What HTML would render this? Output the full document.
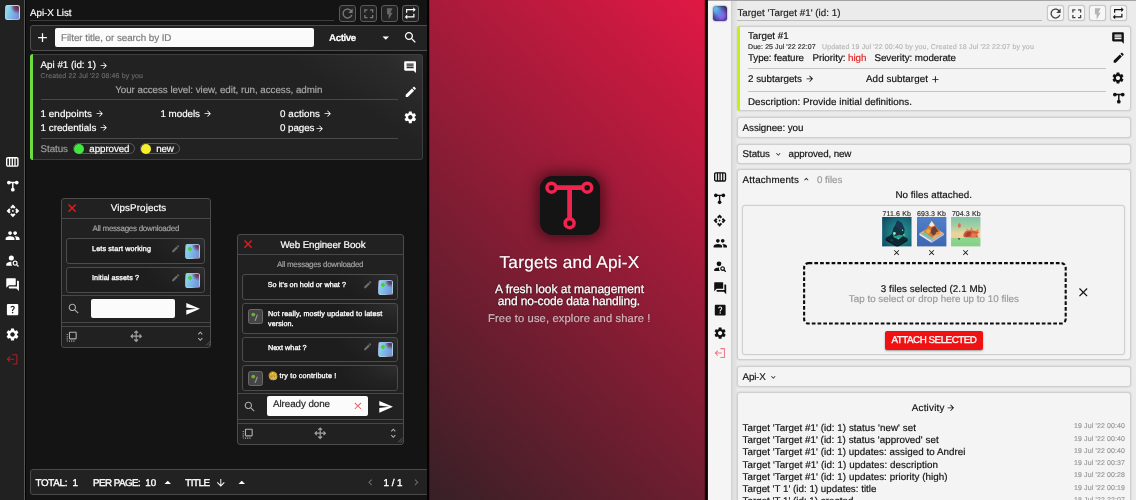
<!DOCTYPE html>
<html lang="en"><head><meta charset="utf-8"><title>Targets and Api-X</title>
<style>
*{box-sizing:border-box;margin:0;padding:0}
html,body{width:1136px;height:500px;overflow:hidden;background:#121212}
body{position:relative;font-family:"Liberation Sans", sans-serif;text-rendering:geometricPrecision}
.b,.i,.t{position:absolute}
.tl{position:absolute;left:0;top:0;width:1136px;height:500px;will-change:transform}
.i{display:block;overflow:visible}
.t{white-space:nowrap;line-height:1;display:block;-webkit-text-stroke-width:.18px}
</style></head>
<body>
<section aria-label="Api-X List panel">
<div class="b" style="left:0.00px;top:0.00px;width:429.00px;height:500.00px;background:#141414"></div>
<div class="b" style="left:0.00px;top:0.00px;width:24.00px;height:500.00px;background:#212121"></div>
<div class="b" style="left:24.00px;top:0.00px;width:1.00px;height:500.00px;background:#555"></div>
<div class="b" style="left:25.00px;top:0.00px;width:1.00px;height:500.00px;background:#030303"></div>
<div class="b" style="left:4.80px;top:4.80px;width:15.50px;height:15.30px;border-radius:2.5px;border:1px solid rgba(215,222,238,.75);background:radial-gradient(circle at 88% 8%,#6b2a48 0%,rgba(107,42,72,.85) 16%,rgba(107,42,72,0) 42%),linear-gradient(105deg,#92e2ea 0%,#7cb6ea 50%,#7a84d2 100%)"></div>
<svg class="i" style="left:6.10px;top:156.60px;width:12.6px;height:9.8px" viewBox="0 0 12.6 9.8"><rect x=".7" y=".7" width="11.2" height="8.4" rx="1.2" fill="none" stroke="#ffffff" stroke-width="1.4"/><path d="M3.6 .7v8.4M6.3 .7v8.4M9 .7v8.4" stroke="#ffffff" stroke-width="1.3" fill="none"/></svg>
<svg class="i" style="left:6.60px;top:179.90px;width:11.6px;height:11.6px" viewBox="0 0 24 24"><path d="M4 5.2H20M12 5.2V19" stroke="#ffffff" stroke-width="3" fill="none"/><circle cx="3.9" cy="5.2" r="3.9" fill="#ffffff"/><circle cx="20.1" cy="5.2" r="3.9" fill="#ffffff"/><circle cx="12" cy="20.1" r="3.9" fill="#ffffff"/></svg>
<svg class="i" style="left:5.50px;top:204.10px;width:13.8px;height:13.8px" viewBox="0 0 24 24"><path fill="#ffffff" d="M14 12l-2 2-2-2 2-2 2 2zm-2-6l2.12 2.12 2.5-2.5L12 1 7.38 5.62l2.5 2.5L12 6zm-6 6l2.12-2.12-2.5-2.5L1 12l4.62 4.62 2.5-2.5L6 12zm12 0l-2.12 2.12 2.5 2.5L23 12l-4.62-4.62-2.5 2.5L18 12zm-6 6l-2.120-2.12-2.5 2.5L12 23l4.62-4.62-2.5-2.5L12 18z"/></svg>
<svg class="i" style="left:4.70px;top:227.90px;width:15.2px;height:15.2px" viewBox="0 0 24 24"><path fill="#ffffff" d="M16 11c1.66 0 2.99-1.34 2.99-3S17.66 5 16 5c-1.66 0-3 1.34-3 3s1.34 3 3 3zm-8 0c1.66 0 2.99-1.34 2.99-3S9.66 5 8 5C6.34 5 5 6.34 5 8s1.34 3 3 3zm0 2c-2.33 0-7 1.17-7 3.5V19h14v-2.5c0-2.33-4.67-3.5-7-3.5zm8 0c-.29 0-.62.02-.97.05 1.16.84 1.97 1.97 1.970 3.45V19h6v-2.5c0-2.33-4.67-3.5-7-3.500z"/></svg>
<svg class="i" style="left:4.80px;top:252.80px;width:15.2px;height:15.2px" viewBox="0 0 24 24"><path fill="#ffffff" d="M10 4a4 4 0 1 0 0 8a4 4 0 1 0 0-8zM10.35 14.01C7.62 13.91 2 15.27 2 18v2h9.54c-2.470-2.76-1.23-5.89-1.19-5.99zM19.43 18.02c.36-.59.57-1.28.57-2.02 0-2.21-1.79-4-4-4s-4 1.79-4 4 1.79 4 4 4c.74 0 1.43-.22 2.02-.57L20.59 22 22 20.59l-2.57-2.57zM16 18c-1.100 0-2-.9-2-2s.9-2 2-2 2 .9 2 2-.9 2-2 2z"/></svg>
<svg class="i" style="left:4.80px;top:277.40px;width:15.2px;height:15.2px" viewBox="0 0 24 24"><path fill="#ffffff" d="M21 6h-2v9H6v2c0 .55.45 1 1 1h11l4 4V7c0-.55-.45-1-1-1zm-4 6V3c0-.55-.45-1-1-1H3c-.55 0-1 .45-1 1v14l4-4h10c.55 0 1-.45 1-1z"/></svg>
<svg class="i" style="left:4.80px;top:302.10px;width:15.2px;height:15.2px" viewBox="0 0 24 24"><path fill="#ffffff" d="M19 3H5c-1.1 0-2 .9-2 2v14c0 1.1.9 2 2 2h14c1.1 0 2-.9 2-2V5c0-1.1-.9-2-2-2zm-6.99 15c-.7 0-1.26-.56-1.26-1.26 0-.71.56-1.25 1.26-1.25.71 0 1.25.54 1.25 1.25-.01.69-.54 1.26-1.25 1.26zm3.010-7.4c-.76 1.11-1.48 1.46-1.87 2.17-.16.29-.22.48-.22 1.41h-1.820c0-.49-.08-1.29.31-1.98.49-.87 1.42-1.39 1.96-2.16.57-.81.25-2.33-1.37-2.33-1.060 0-1.58.8-1.8 1.48l-1.650-.7C9.01 7.15 10.22 6 11.99 6c1.48 0 2.49.67 3.010 1.52.44.72.7 2.07.02 3.08z"/></svg>
<svg class="i" style="left:4.90px;top:327.10px;width:15.0px;height:15.0px" viewBox="0 0 24 24"><path fill="#ffffff" d="M19.14 12.94c.04-.3.06-.61.06-.94 0-.32-.02-.64-.07-.94l2.03-1.58c.18-.14.23-.41.12-.61l-1.92-3.32c-.12-.22-.37-.29-.59-.22l-2.39.96c-.5-.38-1.03-.7-1.62-.94l-.36-2.54c-.04-.24-.24-.41-.48-.41h-3.84c-.24 0-.43.17-.47.41l-.36 2.54c-.59.24-1.13.57-1.62.94l-2.39-.96c-.22-.08-.47 0-.59.22L2.74 8.87c-.12.21-.08.47.12.61l2.03 1.58c-.05.3-.09.63-.09.94s.02.64.07.94l-2.03 1.58c-.18.14-.23.41-.12.61l1.92 3.32c.12.22.37.29.59.22l2.39-.96c.5.38 1.03.7 1.62.94l.36 2.54c.05.24.24.41.48.41h3.84c.24 0 .44-.17.47-.41l.36-2.54c.59-.24 1.13-.56 1.62-.94l2.39.96c.22.08.47 0 .59-.22l1.92-3.32c.12-.22.07-.47-.12-.61l-2.01-1.58zM12 15.6c-1.98 0-3.6-1.62-3.6-3.6s1.620-3.6 3.6-3.6 3.6 1.62 3.6 3.6-1.62 3.6-3.6 3.6z"/></svg>
<svg class="i" style="left:6.10px;top:352.90px;width:12.6px;height:12.6px" viewBox="0 0 24 24"><path d="M12.5 3.2H20.6V20.8H12.5" stroke="#a82028" stroke-width="2" fill="none" stroke-linejoin="round"/><path d="M15.5 12H2.6M7.6 7L2.6 12L7.6 17" stroke="#a82028" stroke-width="2" fill="none"/></svg>
<div class="b" style="left:30.00px;top:20.00px;width:304.00px;height:1px;background:#3c3c3c"></div>
<div class="b" style="left:339.00px;top:5.00px;width:17.00px;height:16.50px;border:1px solid #5a5a5a;border-radius:3px;background:#232323"></div>
<svg class="i" style="left:339.90px;top:5.65px;width:15.2px;height:15.2px" viewBox="0 0 24 24"><path fill="#7a7a7a" d="M17.65 6.35C16.2 4.9 14.21 4 12 4c-4.42 0-7.99 3.58-7.99 8s3.57 8 7.99 8c3.73 0 6.84-2.55 7.73-6h-2.08c-.82 2.33-3.04 4-5.65 4-3.31 0-6-2.69-6-6s2.69-6 6-6c1.66 0 3.14.69 4.22 1.78L13 11h7V4l-2.35 2.35z"/></svg>
<div class="b" style="left:360.00px;top:5.00px;width:17.00px;height:16.50px;border:1px solid #5a5a5a;border-radius:3px;background:#232323"></div>
<svg class="i" style="left:360.75px;top:5.50px;width:15.5px;height:15.5px" viewBox="0 0 24 24"><path fill="#7a7a7a" d="M7 14H5v5h5v-2H7v-3zm-2-4h2V7h3V5H5v5zm12 7h-3v2h5v-5h-2v3zM14 5v2h3v3h2V5h-5z"/></svg>
<div class="b" style="left:381.00px;top:5.00px;width:17.00px;height:16.50px;border:1px solid #5a5a5a;border-radius:3px;background:#232323"></div>
<svg class="i" style="left:382.75px;top:6.50px;width:13.5px;height:13.5px" viewBox="0 0 24 24"><path fill="#666" d="M7 2v11h3v9l7-12h-4l4-8z"/></svg>
<div class="b" style="left:402.00px;top:5.00px;width:17.00px;height:16.50px;border:1px solid #5e5e5e;border-radius:3px;background:#232323"></div>
<svg class="i" style="left:403.25px;top:6.00px;width:14.5px;height:14.5px" viewBox="0 0 24 24"><path fill="#fff" d="M7 7h10v3l4-4-4-4v3H5v6h2V7zm10 10H7v-3l-4 4 4 4v-3h12v-6h-2v4z"/></svg>
<div class="b" style="left:29.50px;top:24.80px;width:410.00px;height:26.00px;border:1px solid #4e4e4e;border-radius:3px;background:#222"></div>
<svg class="i" style="left:35.00px;top:30.10px;width:15px;height:15px" viewBox="0 0 24 24"><path fill="#fff" d="M19 13h-6v6h-2v-6H5v-2h6V5h2v6h6v2z"/></svg>
<div class="b" style="left:55.30px;top:28.20px;width:258.40px;height:18.90px;background:#fbfbfb;border-radius:2px"></div>
<svg class="i" style="left:378.45px;top:29.55px;width:15.5px;height:15.5px" viewBox="0 0 24 24"><path fill="#fff" d="M7 10l5 5 5-5z"/></svg>
<svg class="i" style="left:403.10px;top:30.10px;width:15px;height:15px" viewBox="0 0 24 24"><path fill="#fff" d="M15.5 14h-.79l-.28-.27C15.41 12.59 16 11.11 16 9.5 16 5.91 13.09 3 9.5 3S3 5.91 3 9.5 5.91 16 9.5 16c1.61 0 3.09-.59 4.23-1.57l.27.28v.79l5 4.99L20.49 19l-4.99-5zm-6 0C7.01 14 5 11.99 5 9.5S7.01 5 9.5 5 14 7.01 14 9.5 11.99 14 9.5 14z"/></svg>
<div class="b" style="left:30.00px;top:54.00px;width:392.60px;height:105.60px;border:1px solid #3e3e3e;border-left:0;border-radius:3px;background:linear-gradient(214deg,#343434 0%,#2b2b2b 8%,#222 26%)"></div>
<div class="b" style="left:30.00px;top:54.00px;width:3.20px;height:105.60px;background:#6ddc3e;border-radius:3px 0 0 3px"></div>
<svg class="i" style="left:99.40px;top:60.50px;width:9.4px;height:9.4px" viewBox="0 0 24 24"><path fill="#fff" d="M12 4l-1.41 1.41L16.17 11H4v2h12.17l-5.58 5.59L12 20l8-8z"/></svg>
<div class="b" style="left:40.50px;top:99.20px;width:357.50px;height:1px;background:#4a4a4a"></div>
<svg class="i" style="left:94.70px;top:108.90px;width:9.4px;height:9.4px" viewBox="0 0 24 24"><path fill="#fff" d="M12 4l-1.41 1.41L16.17 11H4v2h12.17l-5.58 5.59L12 20l8-8z"/></svg>
<svg class="i" style="left:99.30px;top:123.10px;width:9.4px;height:9.4px" viewBox="0 0 24 24"><path fill="#fff" d="M12 4l-1.41 1.41L16.17 11H4v2h12.17l-5.58 5.59L12 20l8-8z"/></svg>
<svg class="i" style="left:203.30px;top:108.90px;width:9.4px;height:9.4px" viewBox="0 0 24 24"><path fill="#fff" d="M12 4l-1.41 1.41L16.17 11H4v2h12.17l-5.58 5.59L12 20l8-8z"/></svg>
<svg class="i" style="left:322.80px;top:108.70px;width:9.4px;height:9.4px" viewBox="0 0 24 24"><path fill="#fff" d="M12 4l-1.41 1.41L16.17 11H4v2h12.17l-5.58 5.59L12 20l8-8z"/></svg>
<svg class="i" style="left:314.60px;top:123.60px;width:9.4px;height:9.4px" viewBox="0 0 24 24"><path fill="#fff" d="M12 4l-1.41 1.41L16.17 11H4v2h12.17l-5.58 5.59L12 20l8-8z"/></svg>
<div class="b" style="left:40.50px;top:137.60px;width:357.50px;height:1px;background:#4a4a4a"></div>
<div class="b" style="left:73.40px;top:143.20px;width:61.80px;height:11.20px;border:1px solid #5c5c5c;border-radius:6px"></div>
<div class="b" style="left:73.70px;top:143.50px;width:10.50px;height:10.50px;border-radius:50%;background:#3ee83e"></div>
<div class="b" style="left:140.40px;top:143.20px;width:39.30px;height:11.20px;border:1px solid #5c5c5c;border-radius:6px"></div>
<div class="b" style="left:140.70px;top:143.50px;width:10.50px;height:10.50px;border-radius:50%;background:#f4f02c"></div>
<svg class="i" style="left:403.40px;top:60.20px;width:14.2px;height:14.2px" viewBox="0 0 24 24"><path fill="#fff" d="M21.99 4c0-1.1-.89-2-1.99-2H4c-1.1 0-2 .9-2 2v12c0 1.1.9 2 2 2h14l4 4-.01-18zM18 14H6v-2h12v2zm0-3H6V9h12v2zm0-3H6V6h12v2z"/></svg>
<svg class="i" style="left:403.60px;top:85.40px;width:13.6px;height:13.6px" viewBox="0 0 24 24"><path fill="#fff" d="M3 17.25V21h3.75L17.81 9.94l-3.75-3.75L3 17.25zM20.71 7.04c.39-.39.39-1.02 0-1.41l-2.34-2.34c-.39-.39-1.02-.39-1.41 0l-1.83 1.83 3.75 3.75 1.83-1.83z"/></svg>
<svg class="i" style="left:403.20px;top:109.70px;width:14.6px;height:14.6px" viewBox="0 0 24 24"><path fill="#fff" d="M19.14 12.94c.04-.3.06-.61.06-.94 0-.32-.02-.64-.07-.94l2.03-1.58c.18-.14.23-.41.12-.61l-1.92-3.32c-.12-.22-.37-.29-.59-.22l-2.39.96c-.5-.38-1.03-.7-1.62-.94l-.36-2.54c-.04-.24-.24-.41-.48-.41h-3.84c-.24 0-.43.17-.47.41l-.36 2.54c-.59.24-1.13.57-1.62.94l-2.39-.96c-.22-.08-.47 0-.59.22L2.74 8.87c-.12.21-.08.47.12.61l2.03 1.58c-.05.3-.09.63-.09.94s.02.64.07.94l-2.03 1.58c-.18.14-.23.41-.12.61l1.92 3.32c.12.22.37.29.59.22l2.39-.96c.5.38 1.03.7 1.62.94l.36 2.54c.05.24.24.41.48.41h3.84c.24 0 .44-.17.47-.41l.36-2.54c.59-.24 1.13-.56 1.62-.94l2.39.96c.22.08.47 0 .59-.22l1.92-3.32c.12-.22.07-.47-.12-.61l-2.01-1.58zM12 15.6c-1.98 0-3.6-1.62-3.6-3.6s1.620-3.6 3.6-3.6 3.6 1.62 3.6 3.6-1.62 3.6-3.6 3.6z"/></svg>
<div class="b" style="left:61.20px;top:197.80px;width:150.00px;height:149.80px;border:1px solid #4c4c4c;border-radius:3px;background:#212121"></div>
<svg class="i" style="left:67.60px;top:204.20px;width:8.2px;height:8.2px" viewBox="0 0 8 8"><path d="M.5 .5L7.5 7.5M7.5 .5L.5 7.5" stroke="#e21a1a" stroke-width="1.5"/></svg>
<div class="b" style="left:62.20px;top:217.60px;width:148.00px;height:1px;background:#484848"></div>
<div class="b" style="left:66.20px;top:238.30px;width:139.20px;height:25.80px;border:1px solid #4c4c4c;border-radius:3px;background:radial-gradient(ellipse 60px 30px at 100% 0%,#2e2e2e 0%,#222 60%,#1d1d1d 100%)"></div>
<svg class="i" style="left:170.60px;top:243.70px;width:9.4px;height:9.4px" viewBox="0 0 24 24"><path fill="#6e6e6e" d="M3 17.25V21h3.75L17.81 9.94l-3.75-3.75L3 17.25zM20.71 7.04c.39-.39.39-1.02 0-1.41l-2.34-2.34c-.39-.39-1.02-.39-1.41 0l-1.83 1.83 3.75 3.75 1.83-1.83z"/></svg>
<div class="b" style="left:185.00px;top:244.00px;width:15.00px;height:15.00px;border-radius:2.5px;border:1px solid rgba(200,210,230,.4);background:radial-gradient(circle 2.1px at 30% 30%,#55c83c 0 80%,rgba(88,216,74,0) 100%),radial-gradient(circle at 92% 4%,#6b2a48 0%,rgba(107,42,72,.8) 14%,rgba(107,42,72,0) 36%),linear-gradient(105deg,#8edae6 0%,#7ab6e6 50%,#7690d4 100%)"></div>
<div class="b" style="left:66.20px;top:267.30px;width:139.20px;height:25.50px;border:1px solid #4c4c4c;border-radius:3px;background:radial-gradient(ellipse 60px 30px at 100% 0%,#2e2e2e 0%,#222 60%,#1d1d1d 100%)"></div>
<svg class="i" style="left:170.60px;top:272.90px;width:9.4px;height:9.4px" viewBox="0 0 24 24"><path fill="#6e6e6e" d="M3 17.25V21h3.75L17.81 9.94l-3.75-3.75L3 17.25zM20.71 7.04c.39-.39.39-1.02 0-1.41l-2.34-2.34c-.39-.39-1.02-.39-1.41 0l-1.83 1.83 3.75 3.75 1.83-1.83z"/></svg>
<div class="b" style="left:185.00px;top:272.60px;width:15.00px;height:15.00px;border-radius:2.5px;border:1px solid rgba(200,210,230,.4);background:radial-gradient(circle 2.1px at 30% 30%,#55c83c 0 80%,rgba(88,216,74,0) 100%),radial-gradient(circle at 92% 4%,#6b2a48 0%,rgba(107,42,72,.8) 14%,rgba(107,42,72,0) 36%),linear-gradient(105deg,#8edae6 0%,#7ab6e6 50%,#7690d4 100%)"></div>
<div class="b" style="left:62.20px;top:294.80px;width:148.00px;height:1px;background:#484848"></div>
<div class="b" style="left:62.20px;top:321.80px;width:148.00px;height:1px;background:#484848"></div>
<div class="b" style="left:62.20px;top:326.20px;width:148.00px;height:1px;background:#484848"></div>
<svg class="i" style="left:64.70px;top:330.00px;width:13.4px;height:13.4px" viewBox="0 0 24 24"><path fill="#b0b0b0" d="M3 13h2v-2H3v2zm0 4h2v-2H3v2zm2 4v-2H3c0 1.1.89 2 2 2zM3 9h2V7H3v2zm12 12h2v-2h-2v2zm4-18H9c-1.11 0-2 .9-2 2v10c0 1.1.89 2 2 2h10c1.1 0 2-.9 2-2V5c0-1.100-.9-2-2-2zm0 12H9V5h10v10zm-8 6h2v-2h-2v2zm-4 0h2v-2H7v2z"/></svg>
<svg class="i" style="left:129.80px;top:330.40px;width:12.4px;height:12.4px" viewBox="0 0 12.4 12.4"><path d="M6.2 1V11.4M1 6.2H11.4M4.3 2.900L6.2 1L8.1 2.900M4.3 9.5L6.2 11.4L8.1 9.500M2.900 4.3L1 6.2L2.900 8.1M9.500 4.300L11.4 6.2L9.500 8.1" stroke="#a2a2a2" stroke-width="1.15" fill="none"/></svg>
<svg class="i" style="left:194.10px;top:330.40px;width:12.6px;height:12.6px" viewBox="0 0 24 24"><path fill="#b0b0b0" d="M12 5.83L15.17 9l1.41-1.41L12 3 7.41 7.59 8.83 9 12 5.83zm0 12.34L8.83 15l-1.41 1.41L12 21l4.59-4.59L15.17 15 12 18.17z"/></svg>
<svg class="i" style="left:204.70px;top:340.30px;width:6px;height:6px" viewBox="0 0 6 6"><path d="M5.5 1L1 5.5M5.5 3.5L3.5 5.5" stroke="#6a6a6a" stroke-width=".8"/></svg>
<svg class="i" style="left:67.10px;top:301.60px;width:13.6px;height:13.6px" viewBox="0 0 24 24"><path fill="#a8a8a8" d="M15.5 14h-.79l-.28-.27C15.41 12.59 16 11.11 16 9.5 16 5.91 13.09 3 9.5 3S3 5.91 3 9.5 5.91 16 9.5 16c1.61 0 3.09-.59 4.23-1.57l.27.28v.79l5 4.99L20.49 19l-4.99-5zm-6 0C7.01 14 5 11.99 5 9.5S7.01 5 9.5 5 14 7.01 14 9.5 11.99 14 9.5 14z"/></svg>
<div class="b" style="left:91.40px;top:298.60px;width:84.00px;height:19.00px;background:#fbfbfb;border-radius:2px"></div>
<svg class="i" style="left:185.20px;top:300.70px;width:15.6px;height:15.6px" viewBox="0 0 24 24"><path fill="#fff" d="M2.01 21L23 12 2.01 3 2 10l15 2-15 2z"/></svg>
<div class="b" style="left:237.10px;top:234.00px;width:166.50px;height:210.50px;border:1px solid #4c4c4c;border-radius:3px;background:#212121"></div>
<svg class="i" style="left:243.50px;top:240.40px;width:8.2px;height:8.2px" viewBox="0 0 8 8"><path d="M.5 .5L7.5 7.5M7.5 .5L.5 7.5" stroke="#e21a1a" stroke-width="1.5"/></svg>
<div class="b" style="left:238.10px;top:253.80px;width:164.50px;height:1px;background:#484848"></div>
<div class="b" style="left:242.30px;top:274.30px;width:155.40px;height:25.80px;border:1px solid #4c4c4c;border-radius:3px;background:radial-gradient(ellipse 60px 30px at 100% 0%,#2e2e2e 0%,#222 60%,#1d1d1d 100%)"></div>
<svg class="i" style="left:362.80px;top:279.80px;width:9.4px;height:9.4px" viewBox="0 0 24 24"><path fill="#6e6e6e" d="M3 17.25V21h3.75L17.81 9.94l-3.75-3.75L3 17.25zM20.71 7.04c.39-.39.39-1.02 0-1.41l-2.34-2.34c-.39-.39-1.02-.39-1.41 0l-1.83 1.83 3.75 3.75 1.83-1.83z"/></svg>
<div class="b" style="left:377.70px;top:280.00px;width:15.00px;height:15.00px;border-radius:2.5px;border:1px solid rgba(200,210,230,.4);background:radial-gradient(circle 2.1px at 30% 30%,#55c83c 0 80%,rgba(88,216,74,0) 100%),radial-gradient(circle at 92% 4%,#6b2a48 0%,rgba(107,42,72,.8) 14%,rgba(107,42,72,0) 36%),linear-gradient(105deg,#8edae6 0%,#7ab6e6 50%,#7690d4 100%)"></div>
<div class="b" style="left:242.30px;top:303.30px;width:155.40px;height:30.30px;border:1px solid #4c4c4c;border-radius:3px;background:radial-gradient(ellipse 60px 30px at 100% 0%,#2e2e2e 0%,#222 60%,#1d1d1d 100%)"></div>
<div class="b" style="left:248.00px;top:308.50px;width:15.00px;height:15.00px;border-radius:2.5px;border:1px solid #6a6a6a;background:#454545"></div>
<svg class="i" style="left:248.00px;top:308.50px;width:15px;height:15px" viewBox="0 0 15 15"><circle cx="5.300" cy="5.6" r="1.900" fill="#66b432"/><path d="M9.4 5.8L7.300 11.2" stroke="#9a9a9a" stroke-width="1.1"/><circle cx="7.300" cy="11.2" r=".8" fill="#8a8a8a"/></svg>
<div class="b" style="left:242.30px;top:336.60px;width:155.40px;height:25.90px;border:1px solid #4c4c4c;border-radius:3px;background:radial-gradient(ellipse 60px 30px at 100% 0%,#2e2e2e 0%,#222 60%,#1d1d1d 100%)"></div>
<svg class="i" style="left:362.90px;top:342.20px;width:9.4px;height:9.4px" viewBox="0 0 24 24"><path fill="#6e6e6e" d="M3 17.25V21h3.75L17.81 9.94l-3.75-3.75L3 17.25zM20.71 7.04c.39-.39.39-1.02 0-1.41l-2.34-2.34c-.39-.39-1.02-.39-1.41 0l-1.83 1.83 3.75 3.75 1.83-1.83z"/></svg>
<div class="b" style="left:377.60px;top:342.00px;width:15.00px;height:15.00px;border-radius:2.5px;border:1px solid rgba(200,210,230,.4);background:radial-gradient(circle 2.1px at 30% 30%,#55c83c 0 80%,rgba(88,216,74,0) 100%),radial-gradient(circle at 92% 4%,#6b2a48 0%,rgba(107,42,72,.8) 14%,rgba(107,42,72,0) 36%),linear-gradient(105deg,#8edae6 0%,#7ab6e6 50%,#7690d4 100%)"></div>
<div class="b" style="left:242.30px;top:365.40px;width:155.40px;height:25.40px;border:1px solid #4c4c4c;border-radius:3px;background:radial-gradient(ellipse 60px 30px at 100% 0%,#2e2e2e 0%,#222 60%,#1d1d1d 100%)"></div>
<div class="b" style="left:248.00px;top:370.50px;width:15.00px;height:15.00px;border-radius:2.5px;border:1px solid #6a6a6a;background:#454545"></div>
<svg class="i" style="left:248.00px;top:370.50px;width:15px;height:15px" viewBox="0 0 15 15"><circle cx="5.300" cy="5.6" r="1.900" fill="#66b432"/><path d="M9.4 5.8L7.300 11.2" stroke="#9a9a9a" stroke-width="1.1"/><circle cx="7.300" cy="11.2" r=".8" fill="#8a8a8a"/></svg>
<svg class="i" style="left:268.60px;top:371.80px;width:8.4px;height:8.4px" viewBox="0 0 10 10"><circle cx="5" cy="5" r="4.9" fill="#fad040"/><path d="M1.7 5.400h6.600a3.300 3 0 0 1-6.600 0z" fill="#fff"/></svg>
<div class="b" style="left:238.10px;top:393.40px;width:164.50px;height:1px;background:#484848"></div>
<div class="b" style="left:238.10px;top:418.80px;width:164.50px;height:1px;background:#484848"></div>
<div class="b" style="left:238.10px;top:423.20px;width:164.50px;height:1px;background:#484848"></div>
<svg class="i" style="left:240.60px;top:427.00px;width:13.4px;height:13.4px" viewBox="0 0 24 24"><path fill="#b0b0b0" d="M3 13h2v-2H3v2zm0 4h2v-2H3v2zm2 4v-2H3c0 1.1.89 2 2 2zM3 9h2V7H3v2zm12 12h2v-2h-2v2zm4-18H9c-1.11 0-2 .9-2 2v10c0 1.1.89 2 2 2h10c1.1 0 2-.9 2-2V5c0-1.100-.9-2-2-2zm0 12H9V5h10v10zm-8 6h2v-2h-2v2zm-4 0h2v-2H7v2z"/></svg>
<svg class="i" style="left:314.10px;top:427.40px;width:12.4px;height:12.4px" viewBox="0 0 12.4 12.4"><path d="M6.2 1V11.4M1 6.2H11.4M4.3 2.900L6.2 1L8.1 2.900M4.3 9.5L6.2 11.4L8.1 9.500M2.900 4.3L1 6.2L2.900 8.1M9.500 4.300L11.4 6.2L9.500 8.1" stroke="#a2a2a2" stroke-width="1.15" fill="none"/></svg>
<svg class="i" style="left:386.50px;top:427.40px;width:12.6px;height:12.6px" viewBox="0 0 24 24"><path fill="#b0b0b0" d="M12 5.83L15.17 9l1.41-1.41L12 3 7.41 7.59 8.83 9 12 5.83zm0 12.34L8.83 15l-1.41 1.41L12 21l4.59-4.59L15.17 15 12 18.17z"/></svg>
<svg class="i" style="left:397.10px;top:437.30px;width:6px;height:6px" viewBox="0 0 6 6"><path d="M5.5 1L1 5.5M5.5 3.5L3.5 5.5" stroke="#6a6a6a" stroke-width=".8"/></svg>
<svg class="i" style="left:243.10px;top:399.60px;width:13.6px;height:13.6px" viewBox="0 0 24 24"><path fill="#a8a8a8" d="M15.5 14h-.79l-.28-.27C15.41 12.59 16 11.11 16 9.5 16 5.91 13.09 3 9.5 3S3 5.91 3 9.5 5.91 16 9.5 16c1.61 0 3.09-.59 4.23-1.57l.27.28v.79l5 4.99L20.49 19l-4.99-5zm-6 0C7.01 14 5 11.99 5 9.5S7.01 5 9.5 5 14 7.01 14 9.5 11.99 14 9.5 14z"/></svg>
<div class="b" style="left:267.20px;top:396.40px;width:100.70px;height:19.50px;background:#fbfbfb;border-radius:2px"></div>
<svg class="i" style="left:352.30px;top:400.30px;width:11.8px;height:11.8px" viewBox="0 0 24 24"><path fill="#ee5a5a" d="M19 6.41L17.59 5 12 10.59 6.41 5 5 6.41 10.59 12 5 17.59 6.41 19 12 13.41 17.59 19 19 17.59 13.41 12z"/></svg>
<svg class="i" style="left:378.00px;top:398.50px;width:15.6px;height:15.6px" viewBox="0 0 24 24"><path fill="#fff" d="M2.01 21L23 12 2.01 3 2 10l15 2-15 2z"/></svg>
<div class="b" style="left:30.00px;top:469.40px;width:410.00px;height:25.40px;border:1px solid #4a4a4a;border-radius:3px;background:#222"></div>
<svg class="i" style="left:159.85px;top:474.85px;width:15.5px;height:15.5px" viewBox="0 0 24 24"><path fill="#fff" d="M7 14l5-5 5 5z"/></svg>
<svg class="i" style="left:215.20px;top:476.50px;width:11.6px;height:11.6px" viewBox="0 0 24 24"><path fill="#fff" d="M20 12l-1.41-1.41L13 16.17V4h-2v12.17l-5.58-5.590L4 12l8 8 8-8z"/></svg>
<svg class="i" style="left:234.05px;top:474.85px;width:15.5px;height:15.5px" viewBox="0 0 24 24"><path fill="#fff" d="M7 14l5-5 5 5z"/></svg>
<svg class="i" style="left:364.00px;top:476.10px;width:12.6px;height:12.6px" viewBox="0 0 24 24"><path fill="#6c6c6c" d="M15.41 7.41L14 6l-6 6 6 6 1.41-1.41L10.83 12z"/></svg>
<svg class="i" style="left:410.00px;top:476.10px;width:12.6px;height:12.6px" viewBox="0 0 24 24"><path fill="#6c6c6c" d="M10 6L8.59 7.41 13.17 12l-4.58 4.59L10 18l6-6z"/></svg>
<div class="b" style="left:427.00px;top:0.00px;width:2.00px;height:500.00px;background:#0a0002"></div>
</section>
<section aria-label="Welcome panel">
<div class="b" style="left:429.00px;top:0.00px;width:276.00px;height:500.00px;background:linear-gradient(42deg,#372026 0%,#e01844 100%)"></div>
<div class="b" style="left:429.00px;top:0.00px;width:1.00px;height:500.00px;background:rgba(0,0,0,.22)"></div>
<div class="b" style="left:704.30px;top:0.00px;width:1.00px;height:500.00px;background:rgba(0,0,0,.18)"></div>
<div class="b" style="left:705.00px;top:0.00px;width:2.60px;height:500.00px;background:linear-gradient(90deg,#30000a,#050001 60%,#222)"></div>
<div class="b" style="left:540.00px;top:176.20px;width:59.50px;height:59.30px;background:#141414;border-radius:12.5px;box-shadow:0 0 14px 3px rgba(10,0,4,.55)"></div>
<svg class="i" style="left:540.00px;top:176.20px;width:59.5px;height:59.3px" viewBox="0 0 59.5 59.3"><g fill="none" stroke="#f0244f" stroke-width="4.3"><path d="M16 11.7H42.700M29.6 11.700V42.700" stroke-width="4.800"/><circle cx="11.500" cy="11.7" r="4.5" stroke-width="3.500"/><circle cx="47.2" cy="11.7" r="4.5" stroke-width="3.500"/><circle cx="29.6" cy="47.2" r="4.5" stroke-width="3.500"/></g></svg>
</section>
<section aria-label="Target details panel">
<div class="b" style="left:707.50px;top:0.00px;width:428.50px;height:500.00px;background:#ebebeb"></div>
<div class="b" style="left:707.50px;top:0.00px;width:23.30px;height:500.00px;background:#f5f5f5"></div>
<div class="b" style="left:730.80px;top:0.00px;width:6.20px;height:500.00px;background:linear-gradient(90deg,#cdcdcd,#dedede 30%,#e6e6e6)"></div>
<div class="b" style="left:707.50px;top:0.00px;width:428.50px;height:1.00px;background:#a4a4a4"></div>
<div class="b" style="left:712.50px;top:5.80px;width:14.60px;height:14.80px;border-radius:3px;background:linear-gradient(to top right,#3a2486 0%,rgba(58,36,134,0) 40%,rgba(60,30,80,0) 58%,#3e2054 96%),linear-gradient(to bottom right,#6ae0e8 0%,#5c8ee6 42%,#8664e0 72%,#46288c 100%);box-shadow:0 0 1.5px #402860,inset 0 0 2px rgba(30,10,60,.7)"></div>
<svg class="i" style="left:713.90px;top:172.10px;width:12.2px;height:9.8px" viewBox="0 0 12.6 9.8"><rect x=".7" y=".7" width="11.2" height="8.4" rx="1.2" fill="none" stroke="#111" stroke-width="1.4"/><path d="M3.6 .7v8.4M6.3 .7v8.4M9 .7v8.4" stroke="#111" stroke-width="1.3" fill="none"/></svg>
<svg class="i" style="left:714.40px;top:193.20px;width:11.2px;height:11.2px" viewBox="0 0 24 24"><path d="M4 5.2H20M12 5.2V19" stroke="#111" stroke-width="3" fill="none"/><circle cx="3.9" cy="5.2" r="3.9" fill="#111"/><circle cx="20.1" cy="5.2" r="3.9" fill="#111"/><circle cx="12" cy="20.1" r="3.9" fill="#111"/></svg>
<svg class="i" style="left:713.40px;top:214.40px;width:13.2px;height:13.2px" viewBox="0 0 24 24"><path fill="#111" d="M14 12l-2 2-2-2 2-2 2 2zm-2-6l2.12 2.12 2.5-2.5L12 1 7.38 5.62l2.5 2.5L12 6zm-6 6l2.12-2.12-2.5-2.5L1 12l4.62 4.62 2.5-2.5L6 12zm12 0l-2.12 2.12 2.5 2.5L23 12l-4.62-4.62-2.5 2.5L18 12zm-6 6l-2.120-2.12-2.5 2.5L12 23l4.62-4.62-2.5-2.5L12 18z"/></svg>
<svg class="i" style="left:712.70px;top:236.30px;width:14.6px;height:14.6px" viewBox="0 0 24 24"><path fill="#111" d="M16 11c1.66 0 2.99-1.34 2.99-3S17.66 5 16 5c-1.66 0-3 1.34-3 3s1.34 3 3 3zm-8 0c1.66 0 2.99-1.34 2.99-3S9.66 5 8 5C6.34 5 5 6.34 5 8s1.34 3 3 3zm0 2c-2.33 0-7 1.17-7 3.5V19h14v-2.5c0-2.33-4.67-3.5-7-3.5zm8 0c-.29 0-.62.02-.97.05 1.16.84 1.97 1.97 1.970 3.45V19h6v-2.5c0-2.33-4.67-3.5-7-3.500z"/></svg>
<svg class="i" style="left:712.80px;top:259.30px;width:14.4px;height:14.4px" viewBox="0 0 24 24"><path fill="#111" d="M10 4a4 4 0 1 0 0 8a4 4 0 1 0 0-8zM10.35 14.01C7.62 13.91 2 15.27 2 18v2h9.54c-2.470-2.76-1.23-5.89-1.19-5.99zM19.43 18.02c.36-.59.57-1.28.57-2.02 0-2.21-1.79-4-4-4s-4 1.79-4 4 1.79 4 4 4c.74 0 1.43-.22 2.02-.57L20.59 22 22 20.59l-2.57-2.57zM16 18c-1.100 0-2-.9-2-2s.9-2 2-2 2 .9 2 2-.9 2-2 2z"/></svg>
<svg class="i" style="left:712.80px;top:281.00px;width:14.4px;height:14.4px" viewBox="0 0 24 24"><path fill="#111" d="M21 6h-2v9H6v2c0 .55.45 1 1 1h11l4 4V7c0-.55-.45-1-1-1zm-4 6V3c0-.55-.45-1-1-1H3c-.55 0-1 .45-1 1v14l4-4h10c.55 0 1-.45 1-1z"/></svg>
<svg class="i" style="left:712.80px;top:303.20px;width:14.4px;height:14.4px" viewBox="0 0 24 24"><path fill="#111" d="M19 3H5c-1.1 0-2 .9-2 2v14c0 1.1.9 2 2 2h14c1.1 0 2-.9 2-2V5c0-1.1-.9-2-2-2zm-6.99 15c-.7 0-1.26-.56-1.26-1.26 0-.71.56-1.25 1.26-1.25.71 0 1.25.54 1.25 1.25-.01.69-.54 1.26-1.25 1.26zm3.010-7.4c-.76 1.11-1.48 1.46-1.87 2.17-.16.29-.22.48-.22 1.41h-1.820c0-.49-.08-1.29.31-1.98.49-.87 1.42-1.39 1.96-2.16.57-.81.25-2.33-1.37-2.33-1.060 0-1.58.8-1.8 1.48l-1.650-.7C9.01 7.15 10.22 6 11.99 6c1.48 0 2.49.67 3.010 1.52.44.72.7 2.07.02 3.08z"/></svg>
<svg class="i" style="left:712.90px;top:325.60px;width:14.2px;height:14.2px" viewBox="0 0 24 24"><path fill="#111" d="M19.14 12.94c.04-.3.06-.61.06-.94 0-.32-.02-.64-.07-.94l2.03-1.58c.18-.14.23-.41.12-.61l-1.92-3.32c-.12-.22-.37-.29-.59-.22l-2.39.96c-.5-.38-1.03-.7-1.62-.94l-.36-2.54c-.04-.24-.24-.41-.48-.41h-3.84c-.24 0-.43.17-.47.41l-.36 2.54c-.59.24-1.13.57-1.62.94l-2.39-.96c-.22-.08-.47 0-.59.22L2.74 8.87c-.12.21-.08.47.12.61l2.03 1.58c-.05.3-.09.63-.09.94s.02.64.07.94l-2.03 1.58c-.18.14-.23.41-.12.61l1.92 3.32c.12.22.37.29.59.22l2.39-.96c.5.38 1.03.7 1.62.94l.36 2.54c.05.24.24.41.48.41h3.84c.24 0 .44-.17.47-.41l.36-2.54c.59-.24 1.13-.56 1.62-.94l2.39.96c.22.08.47 0 .59-.22l1.92-3.32c.12-.22.07-.47-.12-.61l-2.01-1.58zM12 15.6c-1.98 0-3.6-1.62-3.6-3.6s1.620-3.6 3.6-3.6 3.6 1.62 3.6 3.6-1.62 3.6-3.6 3.6z"/></svg>
<svg class="i" style="left:713.90px;top:346.50px;width:12.2px;height:12.2px" viewBox="0 0 24 24"><path d="M12.5 3.2H20.6V20.8H12.5" stroke="#f0788c" stroke-width="2" fill="none" stroke-linejoin="round"/><path d="M15.5 12H2.6M7.6 7L2.6 12L7.6 17" stroke="#f0788c" stroke-width="2" fill="none"/></svg>
<div class="b" style="left:737.40px;top:20.00px;width:304.20px;height:1px;background:#bcbcbc"></div>
<div class="b" style="left:1047.00px;top:5.20px;width:16.60px;height:16.20px;border:1px solid #c8c8c8;border-radius:3px;background:#f6f6f6;box-shadow:0 0 1px rgba(0,0,0,.25)"></div>
<svg class="i" style="left:1047.70px;top:5.70px;width:15.2px;height:15.2px" viewBox="0 0 24 24"><path fill="#444" d="M17.65 6.35C16.2 4.9 14.21 4 12 4c-4.42 0-7.99 3.58-7.99 8s3.57 8 7.99 8c3.73 0 6.84-2.55 7.73-6h-2.08c-.82 2.33-3.04 4-5.65 4-3.31 0-6-2.69-6-6s2.69-6 6-6c1.66 0 3.14.69 4.22 1.78L13 11h7V4l-2.35 2.35z"/></svg>
<div class="b" style="left:1068.20px;top:5.20px;width:16.60px;height:16.20px;border:1px solid #c8c8c8;border-radius:3px;background:#f6f6f6;box-shadow:0 0 1px rgba(0,0,0,.25)"></div>
<svg class="i" style="left:1068.75px;top:5.55px;width:15.5px;height:15.5px" viewBox="0 0 24 24"><path fill="#444" d="M7 14H5v5h5v-2H7v-3zm-2-4h2V7h3V5H5v5zm12 7h-3v2h5v-5h-2v3zM14 5v2h3v3h2V5h-5z"/></svg>
<div class="b" style="left:1089.40px;top:5.20px;width:16.60px;height:16.20px;border:1px solid #c8c8c8;border-radius:3px;background:#f6f6f6;box-shadow:0 0 1px rgba(0,0,0,.25)"></div>
<svg class="i" style="left:1090.95px;top:6.55px;width:13.5px;height:13.5px" viewBox="0 0 24 24"><path fill="#b4b4b4" d="M7 2v11h3v9l7-12h-4l4-8z"/></svg>
<div class="b" style="left:1110.00px;top:5.20px;width:16.60px;height:16.20px;border:1px solid #c8c8c8;border-radius:3px;background:#f6f6f6;box-shadow:0 0 1px rgba(0,0,0,.25)"></div>
<svg class="i" style="left:1111.05px;top:6.05px;width:14.5px;height:14.5px" viewBox="0 0 24 24"><path fill="#111" d="M7 7h10v3l4-4-4-4v3H5v6h2V7zm10 10H7v-3l-4 4 4 4v-3h12v-6h-2v4z"/></svg>
<div class="b" style="left:737.00px;top:25.60px;width:393.80px;height:85.60px;border:1px solid #cfcfcf;border-radius:3px;background:#f4f4f4;box-shadow:0 0 2px rgba(0,0,0,.18)"></div>
<div class="b" style="left:737.00px;top:25.60px;width:3.20px;height:85.60px;background:#c4f018;border-radius:3px 0 0 3px"></div>
<div class="b" style="left:748.00px;top:68.30px;width:358.00px;height:1px;background:#c4c4c4"></div>
<svg class="i" style="left:805.20px;top:74.20px;width:9.6px;height:9.6px" viewBox="0 0 24 24"><path fill="#111" d="M12 4l-1.41 1.41L16.17 11H4v2h12.17l-5.58 5.59L12 20l8-8z"/></svg>
<svg class="i" style="left:929.60px;top:73.60px;width:10.8px;height:10.8px" viewBox="0 0 24 24"><path fill="#111" d="M19 13h-6v6h-2v-6H5v-2h6V5h2v6h6v2z"/></svg>
<div class="b" style="left:748.00px;top:90.80px;width:358.00px;height:1px;background:#c4c4c4"></div>
<svg class="i" style="left:1111.30px;top:31.30px;width:14px;height:14px" viewBox="0 0 24 24"><path fill="#111" d="M21.99 4c0-1.1-.89-2-1.99-2H4c-1.1 0-2 .9-2 2v12c0 1.1.9 2 2 2h14l4 4-.01-18zM18 14H6v-2h12v2zm0-3H6V9h12v2zm0-3H6V6h12v2z"/></svg>
<svg class="i" style="left:1111.60px;top:51.10px;width:13.4px;height:13.4px" viewBox="0 0 24 24"><path fill="#111" d="M3 17.25V21h3.75L17.81 9.94l-3.75-3.75L3 17.25zM20.71 7.04c.39-.39.39-1.02 0-1.41l-2.34-2.34c-.39-.39-1.02-.39-1.41 0l-1.83 1.83 3.75 3.75 1.83-1.83z"/></svg>
<svg class="i" style="left:1111.30px;top:71.20px;width:14px;height:14px" viewBox="0 0 24 24"><path fill="#111" d="M19.14 12.94c.04-.3.06-.61.06-.94 0-.32-.02-.64-.07-.94l2.03-1.58c.18-.14.23-.41.12-.61l-1.92-3.32c-.12-.22-.37-.29-.59-.22l-2.39.96c-.5-.38-1.03-.7-1.62-.94l-.36-2.54c-.04-.24-.24-.41-.48-.41h-3.84c-.24 0-.43.17-.47.41l-.36 2.54c-.59.24-1.13.57-1.62.94l-2.39-.96c-.22-.08-.47 0-.59.22L2.74 8.87c-.12.21-.08.47.12.61l2.03 1.58c-.05.3-.09.63-.09.94s.02.64.07.94l-2.03 1.58c-.18.14-.23.41-.12.61l1.92 3.32c.12.22.37.29.59.22l2.39-.96c.5.38 1.03.7 1.62.94l.36 2.54c.05.24.24.41.48.41h3.84c.24 0 .44-.17.47-.41l.36-2.54c.59-.24 1.13-.56 1.62-.94l2.39.96c.22.08.47 0 .59-.22l1.92-3.32c.12-.22.07-.47-.12-.61l-2.01-1.58zM12 15.6c-1.98 0-3.6-1.62-3.6-3.6s1.620-3.6 3.6-3.6 3.6 1.62 3.6 3.6-1.62 3.6-3.6 3.6z"/></svg>
<svg class="i" style="left:1112.50px;top:91.60px;width:11.6px;height:11.6px" viewBox="0 0 24 24"><path d="M4 5.2H20M12 5.2V19" stroke="#111" stroke-width="3" fill="none"/><circle cx="3.9" cy="5.2" r="3.9" fill="#111"/><circle cx="20.1" cy="5.2" r="3.9" fill="#111"/><circle cx="12" cy="20.1" r="3.9" fill="#111"/></svg>
<div class="b" style="left:737.00px;top:117.30px;width:393.80px;height:20.80px;border:1px solid #cfcfcf;border-radius:3px;background:#f4f4f4;box-shadow:0 0 2px rgba(0,0,0,.18)"></div>
<div class="b" style="left:737.00px;top:143.50px;width:393.80px;height:20.00px;border:1px solid #cfcfcf;border-radius:3px;background:#f4f4f4;box-shadow:0 0 2px rgba(0,0,0,.18)"></div>
<svg class="i" style="left:773.70px;top:149.50px;width:8.6px;height:8.6px" viewBox="0 0 24 24"><path fill="#111" d="M16.59 8.59L12 13.17 7.41 8.59 6 10l6 6 6-6z"/></svg>
<div class="b" style="left:737.00px;top:169.00px;width:393.80px;height:191.20px;border:1px solid #cfcfcf;border-radius:3px;background:#f4f4f4;box-shadow:0 0 2px rgba(0,0,0,.18)"></div>
<svg class="i" style="left:802.40px;top:175.30px;width:8.6px;height:8.6px" viewBox="0 0 24 24"><path fill="#111" d="M12 8l-6 6 1.41 1.41L12 10.83l4.59 4.59L18 14z"/></svg>
<div class="b" style="left:742.40px;top:205.00px;width:383.00px;height:150.20px;border:1px solid #cfcfcf;border-radius:3px;background:#f3f3f3;box-shadow:0 0 1.5px rgba(0,0,0,.15)"></div>
<svg class="i" style="left:882.00px;top:217.40px;width:29.7px;height:29.4px" viewBox="0 0 30 30"><defs><radialGradient id="g1" cx=".62" cy=".55" r=".8"><stop offset="0" stop-color="#2a9c8e"/><stop offset=".5" stop-color="#1b7480"/><stop offset="1" stop-color="#0e4660"/></radialGradient><filter id="b1" x="-10%" y="-10%" width="120%" height="120%"><feGaussianBlur stdDeviation=".55"/></filter><clipPath id="c1"><rect width="30" height="30"/></clipPath></defs><rect width="30" height="30" fill="url(#g1)"/><g clip-path="url(#c1)"><g filter="url(#b1)"><path d="M3.500 21.500l10-5.500 12.500 6-10.500 6.500z" fill="#0b2630"/><path d="M3.500 21.500v2.500l12 7v-2.500zM26 22v2.500l-10.500 6.500v-2.500z" fill="#081a22"/><path d="M9.500 20l2-9 2-2.500 2-5 4.500 2.500 3 6.500-1 7-6 3.500z" fill="#15303c"/><path d="M13.500 8.500l2-5 4.500 2.500 2 5-3.500 3z" fill="#1e3452"/><path d="M7 20.500l3.500-4 2 3-2 3z" fill="#10262e"/><path d="M10.500 17l3 2.500 4-1.500 4.500 1-5 4-5-2z" fill="#2ad0b0" opacity=".7"/><circle cx="12.500" cy="16.800" r="1.400" fill="#86f6e2"/><circle cx="20.800" cy="13.500" r=".8" fill="#6aecd0"/><circle cx="22.200" cy="18.200" r=".9" fill="#62e4cc"/><circle cx="16.500" cy="22" r=".8" fill="#58dcc0"/><circle cx="10" cy="23.500" r=".6" fill="#3ab8a8"/></g></g></svg>
<svg class="i" style="left:916.80px;top:217.40px;width:29.4px;height:29.4px" viewBox="0 0 30 30"><defs><linearGradient id="g2" x1="0" y1="0" x2="0" y2="1"><stop offset="0" stop-color="#4f80c8"/><stop offset="1" stop-color="#3e66b2"/></linearGradient><filter id="b2" x="-10%" y="-10%" width="120%" height="120%"><feGaussianBlur stdDeviation=".45"/></filter></defs><rect width="30" height="30" fill="url(#g2)"/><g filter="url(#b2)"><path d="M2.500 16.500l12.500-7.500 12.500 7.500-12.500 8z" fill="#e0b078"/><path d="M2.500 16.500v1.800l12.500 8v-1.800z" fill="#eef0f4"/><path d="M27.500 16.500v1.800l-12.500 8v-1.800z" fill="#b4c2da"/><path d="M4.500 17l5-2.500 7 6.500-1.500 2.500z" fill="#6cc4b8"/><path d="M7 15l4.500-5.500 3.500-5.500 3.500 4.500 5 6.500-8 6z" fill="#d0783c"/><path d="M15 4l-2.800 4.500 2 1.500 2.300-.5 1.500-1z" fill="#f6e6e2"/><path d="M15 11l3.500-1.500 3.500 5.500-5.500 4-2.500-3z" fill="#6a3c34"/><path d="M8.500 15l3-3.500 2.500 3-2.500 3z" fill="#f0a838"/><path d="M19 16l3-1.500 2 2-3.500 2.500z" fill="#e88a40"/></g></svg>
<svg class="i" style="left:951.20px;top:217.40px;width:29.5px;height:29.4px" viewBox="0 0 30 30"><defs><linearGradient id="g3" x1="0" y1="0" x2="0" y2="1"><stop offset="0" stop-color="#7ec4a6"/><stop offset=".32" stop-color="#a4d0a4"/><stop offset=".55" stop-color="#ecd49c"/><stop offset=".7" stop-color="#f0cc98"/><stop offset=".73" stop-color="#8ed690"/><stop offset="1" stop-color="#84d084"/></linearGradient><filter id="b3" x="-10%" y="-10%" width="120%" height="120%"><feGaussianBlur stdDeviation=".5"/></filter></defs><rect width="30" height="30" fill="url(#g3)"/><g filter="url(#b3)"><path d="M12.500 18.500c.5-3 3-5 6.500-5 3 0 5.500 1 7.500.5l2.500 1.500c-2 .5-2.500 1.500-2 3.500l1 2h-13c-2-.5-3-1.500-2.500-3z" fill="#d45a3c"/><path d="M14.500 18c1-2.500 3.500-3.500 6-2.500l-1 4-4.500 1z" fill="#a83c34"/><path d="M19 14l2-4 1.500 4zM24 14.500l4.500-2.500-1.500 3.500zM16.500 14.500l-1-3 2.500 2z" fill="#e88450"/><path d="M21 17c2-1 4-.5 5.500 1l-2 2.500-4 .5z" fill="#e87a4a"/><ellipse cx="8.500" cy="8.700" rx="1.500" ry="2.300" fill="#e26a52"/><ellipse cx="8.200" cy="22.300" rx="1.100" ry=".9" fill="#5a5038"/></g></svg>
<svg class="i" style="left:892.10px;top:247.70px;width:9.2px;height:9.2px" viewBox="0 0 24 24"><path fill="#111" d="M19 6.41L17.59 5 12 10.59 6.41 5 5 6.41 10.59 12 5 17.59 6.41 19 12 13.41 17.59 19 19 17.59 13.41 12z"/></svg>
<svg class="i" style="left:926.80px;top:247.70px;width:9.2px;height:9.2px" viewBox="0 0 24 24"><path fill="#111" d="M19 6.41L17.59 5 12 10.59 6.41 5 5 6.41 10.59 12 5 17.59 6.41 19 12 13.41 17.59 19 19 17.59 13.41 12z"/></svg>
<svg class="i" style="left:961.40px;top:247.70px;width:9.2px;height:9.2px" viewBox="0 0 24 24"><path fill="#111" d="M19 6.41L17.59 5 12 10.59 6.41 5 5 6.41 10.59 12 5 17.59 6.41 19 12 13.41 17.59 19 19 17.59 13.41 12z"/></svg>
<svg class="i" style="left:802.60px;top:262.00px;width:263.8px;height:62.6px" viewBox="0 0 263.8 62.6"><rect x="1.1" y="1.1" width="261.6" height="60.4" rx="4.5" fill="none" stroke="#0c0c0c" stroke-width="2.1" stroke-dasharray="3.7 2.05"/></svg>
<svg class="i" style="left:1075.70px;top:285.30px;width:14.6px;height:14.6px" viewBox="0 0 24 24"><path fill="#111" d="M19 6.41L17.59 5 12 10.59 6.41 5 5 6.41 10.59 12 5 17.59 6.41 19 12 13.41 17.59 19 19 17.59 13.41 12z"/></svg>
<div class="b" style="left:885.30px;top:330.60px;width:97.30px;height:19.00px;background:#f01212;border-radius:2px;box-shadow:0 1px 2px rgba(0,0,0,.35)"></div>
<div class="b" style="left:737.00px;top:366.00px;width:393.80px;height:20.50px;border:1px solid #cfcfcf;border-radius:3px;background:#f4f4f4;box-shadow:0 0 2px rgba(0,0,0,.18)"></div>
<svg class="i" style="left:768.70px;top:372.90px;width:8.6px;height:8.6px" viewBox="0 0 24 24"><path fill="#111" d="M16.59 8.59L12 13.17 7.41 8.59 6 10l6 6 6-6z"/></svg>
<div class="b" style="left:737.00px;top:392.30px;width:393.80px;height:120.00px;border:1px solid #cfcfcf;border-radius:3px;background:#f4f4f4;box-shadow:0 0 2px rgba(0,0,0,.18)"></div>
<svg class="i" style="left:945.80px;top:403.00px;width:9.6px;height:9.6px" viewBox="0 0 24 24"><path fill="#111" d="M12 4l-1.41 1.41L16.17 11H4v2h12.17l-5.58 5.59L12 20l8-8z"/></svg>
</section>
<div class="tl">
<div aria-label="Api-X List panel text">
<span class="t" style="left:30.00px;top:9px;font-size:9.8px;color:#fff;letter-spacing:-0.046px;">Api-X List</span>
<span class="t" style="left:61.00px;top:34px;font-size:9.8px;color:#7a7a7a;letter-spacing:-0.042px;">Filter title, or search by ID</span>
<span class="t" style="left:329.00px;top:34px;font-size:9.8px;color:#fff;font-weight:700;letter-spacing:-0.438px;">Active</span>
<span class="t" style="left:40.60px;top:61px;font-size:9.8px;color:#fff;letter-spacing:-0.011px;">Api #1 (id: 1)</span>
<span class="t" style="left:40.60px;top:73px;font-size:7px;color:#686868;letter-spacing:0.123px;">Created 22 Jul '22 08:46 by you</span>
<span class="t" style="left:115.20px;top:86px;font-size:9.8px;color:#a8a8a8;letter-spacing:-0.043px;">Your access level: view, edit, run, access, admin</span>
<span class="t" style="left:40.50px;top:110px;font-size:9.8px;color:#fff;letter-spacing:0.079px;">1 endpoints</span>
<span class="t" style="left:40.50px;top:124px;font-size:9.8px;color:#fff;letter-spacing:0.019px;">1 credentials</span>
<span class="t" style="left:160.50px;top:110px;font-size:9.8px;color:#fff;letter-spacing:-0.035px;">1 models</span>
<span class="t" style="left:280.00px;top:110px;font-size:9.8px;color:#fff;letter-spacing:0.092px;">0 actions</span>
<span class="t" style="left:280.00px;top:124px;font-size:9.8px;color:#fff;letter-spacing:-0.073px;">0 pages</span>
<span class="t" style="left:40.50px;top:145px;font-size:9.8px;color:#9e9e9e;letter-spacing:-0.051px;">Status</span>
<span class="t" style="left:89.30px;top:145px;font-size:9.8px;color:#fff;letter-spacing:-0.088px;">approved</span>
<span class="t" style="left:156.30px;top:145px;font-size:9.8px;color:#fff;letter-spacing:-0.194px;">new</span>
<span class="t" style="left:110.80px;top:204px;font-size:9.8px;color:#fff;letter-spacing:0.106px;">VipsProjects</span>
<span class="t" style="left:92.50px;top:225px;font-size:8px;color:#a2a2a2;letter-spacing:-0.278px;">All messages downloaded</span>
<span class="t" style="left:92.00px;top:245px;font-size:7.2px;color:#fff;letter-spacing:0.153px;-webkit-text-stroke:.32px #fff;">Lets start working</span>
<span class="t" style="left:92.00px;top:274px;font-size:7.2px;color:#fff;letter-spacing:0.094px;-webkit-text-stroke:.32px #fff;">Initial assets ?</span>
<span class="t" style="left:280.40px;top:241px;font-size:9.8px;color:#fff;letter-spacing:-0.113px;">Web Engineer Book</span>
<span class="t" style="left:277.00px;top:261px;font-size:8px;color:#a2a2a2;letter-spacing:-0.291px;">All messages downloaded</span>
<span class="t" style="left:267.70px;top:281px;font-size:7.2px;color:#fff;letter-spacing:0.073px;-webkit-text-stroke:.32px #fff;">So it's on hold or what ?</span>
<span class="t" style="left:268.00px;top:310px;font-size:7.2px;color:#fff;letter-spacing:0.131px;-webkit-text-stroke:.32px #fff;">Not really, mostly updated to latest</span>
<span class="t" style="left:268.00px;top:320px;font-size:7.2px;color:#fff;letter-spacing:0.057px;-webkit-text-stroke:.32px #fff;">version.</span>
<span class="t" style="left:268.00px;top:344px;font-size:7.2px;color:#fff;letter-spacing:0.062px;-webkit-text-stroke:.32px #fff;">Next what ?</span>
<span class="t" style="left:267.76px;top:371.5px;font-size:9.6px;color:#a87a1c;font-family:'DejaVu Sans',sans-serif;-webkit-text-stroke-width:0">😁</span>
<span class="t" style="left:279.60px;top:372px;font-size:7.2px;color:#fff;letter-spacing:0.177px;-webkit-text-stroke:.32px #fff;">try to contribute !</span>
<span class="t" style="left:273.00px;top:400px;font-size:9.8px;color:#222;letter-spacing:-0.064px;">Already done</span>
<span class="t" style="left:35.50px;top:479px;font-size:9.8px;color:#fff;letter-spacing:-0.307px;-webkit-text-stroke:.35px #fff;">TOTAL:</span>
<span class="t" style="left:72.60px;top:479px;font-size:9.8px;color:#fff;letter-spacing:-0.853px;-webkit-text-stroke:.35px #fff;">1</span>
<span class="t" style="left:92.90px;top:479px;font-size:9.8px;color:#fff;letter-spacing:-0.517px;-webkit-text-stroke:.35px #fff;">PER PAGE:</span>
<span class="t" style="left:145.20px;top:479px;font-size:9.8px;color:#fff;letter-spacing:0.129px;-webkit-text-stroke:.35px #fff;">10</span>
<span class="t" style="left:185.20px;top:479px;font-size:9.8px;color:#fff;letter-spacing:-0.486px;-webkit-text-stroke:.35px #fff;">TITLE</span>
<span class="t" style="left:383.60px;top:479px;font-size:9.8px;color:#fff;letter-spacing:-0.040px;-webkit-text-stroke:.35px #fff;">1 / 1</span>
</div>
<div aria-label="Welcome panel text">
<span class="t" style="left:499.50px;top:254px;font-size:17.2px;color:#fff;letter-spacing:0.256px;text-shadow:0 0 2px rgba(0,0,0,.35);">Targets and Api-X</span>
<span class="t" style="left:495.00px;top:283px;font-size:12px;color:#fff;letter-spacing:-0.017px;-webkit-text-stroke:.25px #fff;text-shadow:0 0 2px rgba(0,0,0,.7),0 0 1px rgba(0,0,0,.5);">A fresh look at management</span>
<span class="t" style="left:497.80px;top:295px;font-size:12px;color:#fff;letter-spacing:-0.128px;-webkit-text-stroke:.25px #fff;text-shadow:0 0 2px rgba(0,0,0,.7),0 0 1px rgba(0,0,0,.5);">and no-code data handling.</span>
<span class="t" style="left:488.00px;top:314px;font-size:11.2px;color:rgba(255,255,255,.62);letter-spacing:0.124px;text-shadow:0 0 2px rgba(0,0,0,.35);">Free to use, explore and share !</span>
</div>
<div aria-label="Target details panel text">
<span class="t" style="left:737.40px;top:9px;font-size:9.8px;color:#222;letter-spacing:0.035px;">Target 'Target #1' (id: 1)</span>
<span class="t" style="left:748.00px;top:32px;font-size:9.8px;color:#111;letter-spacing:-0.031px;">Target #1</span>
<span class="t" style="left:748.00px;top:44px;font-size:7px;color:#333;letter-spacing:0.080px;">Due: 25 Jul '22 22:07</span>
<span class="t" style="left:822.00px;top:44px;font-size:7px;color:#b8b8b8;letter-spacing:0.144px;">Updated 19 Jul '22 00:40 by you,  Created 18 Jul '22 22:07 by you</span>
<span class="t" style="left:748.00px;top:54px;font-size:9.8px;color:#111;letter-spacing:-0.095px;">Type: feature</span>
<span class="t" style="left:812.40px;top:54px;font-size:9.8px;color:#111;letter-spacing:-0.002px;">Priority:</span>
<span class="t" style="left:848.00px;top:54px;font-size:9.8px;color:#e42222;letter-spacing:-0.038px;">high</span>
<span class="t" style="left:874.40px;top:54px;font-size:9.8px;color:#111;letter-spacing:-0.036px;">Severity: moderate</span>
<span class="t" style="left:748.00px;top:75px;font-size:9.8px;color:#111;letter-spacing:0.007px;">2 subtargets</span>
<span class="t" style="left:866.00px;top:75px;font-size:9.8px;color:#111;letter-spacing:0.079px;">Add subtarget</span>
<span class="t" style="left:748.00px;top:98px;font-size:9.8px;color:#111;letter-spacing:0.042px;">Description: Provide initial definitions.</span>
<span class="t" style="left:742.60px;top:124px;font-size:9.8px;color:#111;letter-spacing:-0.060px;">Assignee: you</span>
<span class="t" style="left:742.60px;top:150px;font-size:9.8px;color:#111;letter-spacing:-0.069px;">Status</span>
<span class="t" style="left:788.60px;top:150px;font-size:9.8px;color:#111;letter-spacing:-0.119px;">approved, new</span>
<span class="t" style="left:742.60px;top:176px;font-size:9.8px;color:#111;letter-spacing:0.185px;">Attachments</span>
<span class="t" style="left:817.00px;top:176px;font-size:9.8px;color:#9a9a9a;letter-spacing:-0.030px;">0 files</span>
<span class="t" style="left:895.40px;top:191px;font-size:9.8px;color:#111;letter-spacing:0.051px;">No files attached.</span>
<span class="t" style="left:882.40px;top:211px;font-size:7px;color:#333;letter-spacing:0.145px;">711.6 Kb</span>
<span class="t" style="left:916.90px;top:211px;font-size:7px;color:#333;letter-spacing:0.143px;">693.3 Kb</span>
<span class="t" style="left:951.90px;top:211px;font-size:7px;color:#333;letter-spacing:0.089px;">704.3 Kb</span>
<span class="t" style="left:880.80px;top:285px;font-size:9.8px;color:#111;letter-spacing:0.069px;">3 files selected (2.1 Mb)</span>
<span class="t" style="left:848.80px;top:295px;font-size:9.8px;color:#9a9a9a;letter-spacing:0.020px;">Tap to select or drop here up to 10 files</span>
<span class="t" style="left:891.40px;top:336px;font-size:9.8px;color:#fff;letter-spacing:-0.475px;-webkit-text-stroke:.3px #fff;">ATTACH SELECTED</span>
<span class="t" style="left:742.60px;top:373px;font-size:9.8px;color:#111;letter-spacing:-0.215px;">Api-X</span>
<span class="t" style="left:911.80px;top:404px;font-size:9.8px;color:#111;letter-spacing:0.223px;">Activity</span>
<span class="t" style="left:742.60px;top:424px;font-size:9.8px;color:#111;letter-spacing:0.047px;">Target 'Target #1' (id: 1) status 'new' set</span>
<span class="t" style="left:1074.00px;top:423px;font-size:7px;color:#9a9a9a;letter-spacing:0.115px;">19 Jul '22 00:40</span>
<span class="t" style="left:742.60px;top:436px;font-size:9.8px;color:#111;letter-spacing:0.038px;">Target 'Target #1' (id: 1) status 'approved' set</span>
<span class="t" style="left:1074.00px;top:436px;font-size:7px;color:#9a9a9a;letter-spacing:0.115px;">19 Jul '22 00:40</span>
<span class="t" style="left:742.60px;top:448px;font-size:9.8px;color:#111;letter-spacing:0.046px;">Target 'Target #1' (id: 1) updates: assiged to Andrei</span>
<span class="t" style="left:1074.00px;top:448px;font-size:7px;color:#9a9a9a;letter-spacing:0.115px;">19 Jul '22 00:40</span>
<span class="t" style="left:742.60px;top:461px;font-size:9.8px;color:#111;letter-spacing:0.058px;">Target 'Target #1' (id: 1) updates: description</span>
<span class="t" style="left:1074.00px;top:460px;font-size:7px;color:#9a9a9a;letter-spacing:0.115px;">19 Jul '22 00:37</span>
<span class="t" style="left:742.60px;top:473px;font-size:9.8px;color:#111;letter-spacing:0.048px;">Target 'Target #1' (id: 1) updates: priority (high)</span>
<span class="t" style="left:1074.00px;top:472px;font-size:7px;color:#9a9a9a;letter-spacing:0.115px;">19 Jul '22 00:28</span>
<span class="t" style="left:742.60px;top:485px;font-size:9.8px;color:#111;letter-spacing:0.005px;">Target 'T 1' (id: 1) updates: title</span>
<span class="t" style="left:1074.00px;top:485px;font-size:7px;color:#9a9a9a;letter-spacing:0.115px;">19 Jul '22 00:19</span>
<span class="t" style="left:742.60px;top:497px;font-size:9.8px;color:#111;letter-spacing:0.002px;">Target 'T 1' (id: 1) created</span>
<span class="t" style="left:1074.00px;top:497px;font-size:7px;color:#9a9a9a;letter-spacing:0.115px;">18 Jul '22 22:07</span>
</div>
</div>
</body></html>
